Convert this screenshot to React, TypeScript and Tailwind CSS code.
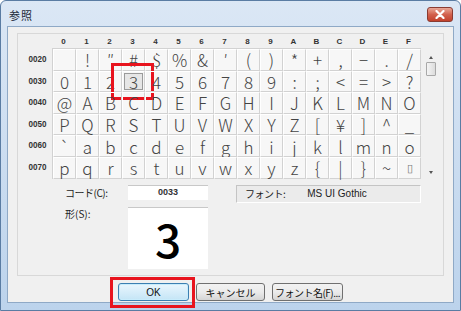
import React from "react";

const rows = [
  { label: "0020", chars: [" ", "!", "″", "#", "$", "%", "&", "′", "(", ")", "*", "+", ",", "−", ".", "/"] },
  { label: "0030", chars: ["0", "1", "2", "3", "4", "5", "6", "7", "8", "9", ":", ";", "<", "=", ">", "?"] },
  { label: "0040", chars: ["@", "A", "B", "C", "D", "E", "F", "G", "H", "I", "J", "K", "L", "M", "N", "O"] },
  { label: "0050", chars: ["P", "Q", "R", "S", "T", "U", "V", "W", "X", "Y", "Z", "[", "¥", "]", "^", "_"] },
  { label: "0060", chars: ["`", "a", "b", "c", "d", "e", "f", "g", "h", "i", "j", "k", "l", "m", "n", "o"] },
  { label: "0070", chars: ["p", "q", "r", "s", "t", "u", "v", "w", "x", "y", "z", "{", "|", "}", "~", "▯"] },
];
const heads = ["0", "1", "2", "3", "4", "5", "6", "7", "8", "9", "A", "B", "C", "D", "E", "F"];

const ui = { fontFamily: '"Noto Sans CJK JP", "Noto Sans", sans-serif' };
const glyph = { fontFamily: '"Noto Sans CJK JP", "Liberation Sans", sans-serif', fontWeight: 300 };
const small = { fontFamily: '"Liberation Sans", "DejaVu Sans", sans-serif' };

export default function App() {
  return (
    <div className="w-[461px] h-[311px] flex flex-col border border-[#5a7ca3] rounded-t-[6px] overflow-hidden bg-gradient-to-b from-[#dbe7f5] to-[#bcd3ec]" style={ui}>
      {/* title bar */}
      <div className="h-[25px] flex items-center justify-between pl-[8px] pr-[7px] shrink-0">
        <span className="text-[11px] text-[#1c2a3a] tracking-[1px] mt-[4px]">参照</span>
        <div className="w-[26px] h-[15px] mt-[2px] rounded-[3px] border border-[#8a3b32] bg-gradient-to-b from-[#e8a797] via-[#d2614d] to-[#c2412c] flex items-center justify-center">
          <svg width="10" height="9" viewBox="0 0 10 9">
            <path d="M1.5 1 L8.5 8 M8.5 1 L1.5 8" stroke="#fff" strokeWidth="2.2" strokeLinecap="round" />
          </svg>
        </div>
      </div>
      {/* client */}
      <div className="flex-1 mx-[6px] mb-[7px] bg-[#f0f0f0] border border-[#8fa9c6] flex flex-col">
        <div className="mt-[6px] ml-[9px] mr-[9px] h-[243px] border border-[#d8d8d8] bg-[#f0f0f0] flex flex-col">
          {/* grid area */}
          <div className="flex mt-[1px]">
            <div className="w-[34px] flex flex-col pt-[14px]">
              {rows.map((r) => (
                <div key={r.label} className="h-[21.6px] flex items-center justify-end pr-[6px] text-[9px] font-bold text-[#333] scale-x-90 origin-right" style={small}>
                  {r.label}
                </div>
              ))}
            </div>
            <div className="flex flex-col">
              <div className="flex h-[13px]">
                {heads.map((h) => (
                  <div key={h} className="w-[23px] flex items-center justify-center text-[8px] font-bold text-[#333]" style={small}>
                    {h}
                  </div>
                ))}
              </div>
              <div className="grid grid-cols-[repeat(16,23px)] grid-rows-[repeat(6,21.6px)] border-t border-l border-[#d2d2d2] bg-[#f7f7f7]">
                {rows.map((r, ri) =>
                  r.chars.map((c, ci) => {
                    const sel = ri === 1 && ci === 3;
                    return (
                      <div key={`${ri}-${ci}`} className="relative border-r border-b border-[#d2d2d2] border-t border-t-white border-l border-l-white flex items-center justify-center">
                        {sel ? (
                          <>
                            <div className="w-[19px] h-[17px] border border-[#9a9a9a] bg-[#e6e6e6] flex items-center justify-center text-[17px] leading-none text-[#444]" style={glyph}>
                              {c}
                            </div>
                            <div className="absolute -left-[12px] -right-[10px] -top-[9px] -bottom-[9px] border-[3px] border-[#e8141e] pointer-events-none" />
                          </>
                        ) : (
                          <span className={`leading-none text-[#444] ${c === "▯" ? "text-[11px] text-[#777]" : "text-[17px]"}`} style={glyph}>
                            {c}
                          </span>
                        )}
                      </div>
                    );
                  })
                )}
              </div>
            </div>
            <div className="w-[16px] flex flex-col items-center pt-[21px] pl-[3px]">
              <div className="w-0 h-0 border-l-[2px] border-r-[2px] border-b-[3px] border-l-transparent border-r-transparent border-b-[#555]" />
              <div className="mt-[3px] w-[10px] h-[14px] border border-[#a8a8a8] rounded-[1px] bg-gradient-to-r from-[#f4f4f4] to-[#dcdcdc]" />
              <div className="flex-1" />
              <div className="mb-[5px] w-0 h-0 border-l-[2px] border-r-[2px] border-t-[3px] border-l-transparent border-r-transparent border-t-[#555]" />
            </div>
          </div>
          {/* bottom section */}
          <div className="flex mt-[6px]">
            <div className="w-[110px] flex flex-col pl-[47px]">
              <div className="h-[15px] text-[10px] text-[#222] flex items-center tracking-[-0.5px]">コード(C):</div>
              <div className="h-[16px] mt-[6px] text-[10px] text-[#222] flex items-center">形(S):</div>
            </div>
            <div className="flex flex-col">
              <div className="w-[80px] h-[15px] bg-white border-t border-[#c8c8c8] flex items-center justify-center text-[9px] font-bold text-[#333]" style={small}>
                0033
              </div>
              <div className="w-[80px] h-[62px] mt-[7px] bg-white border-t border-[#c8c8c8] flex items-center justify-center text-[46px] leading-none text-black font-medium" style={{ fontFamily: '"Noto Sans CJK JP", "Liberation Sans", sans-serif' }}>
                3
              </div>
            </div>
            <div className="ml-[28px] w-[185px] h-[18px] border border-[#c4c4c4] border-b-white border-r-white bg-[#ebebeb] flex items-center text-[10px] text-[#222]">
              <span className="ml-[8px] tracking-[-0.5px]">フォント:</span>
              <span className="ml-[22px]" style={small}>MS UI Gothic</span>
            </div>
          </div>
        </div>
        {/* buttons */}
        <div className="flex justify-center gap-[7px] mt-[7px]">
          <div className="relative w-[71px] h-[18px] rounded-[3px] border border-[#3c7fb1] bg-gradient-to-b from-[#eaf6fd] to-[#c4e5f6] flex items-center justify-center text-[10px] text-[#111] shadow-[inset_0_0_0_1px_#c8ecfc]" style={small}>
            OK
            <div className="absolute -left-[9px] -right-[7px] -top-[7px] -bottom-[8px] border-[3px] border-[#e8141e] pointer-events-none" />
          </div>
          <div className="w-[69px] h-[18px] rounded-[3px] border border-[#707070] bg-gradient-to-b from-[#f2f2f2] via-[#ebebeb] to-[#d5d5d5] flex items-center justify-center text-[10px] text-[#111]">
            キャンセル
          </div>
          <div className="w-[71px] h-[18px] rounded-[3px] border border-[#707070] bg-gradient-to-b from-[#f2f2f2] via-[#ebebeb] to-[#d5d5d5] flex items-center justify-center text-[10px] text-[#111] tracking-[-0.5px]">
            フォント名(F)...
          </div>
        </div>
      </div>
    </div>
  );
}
